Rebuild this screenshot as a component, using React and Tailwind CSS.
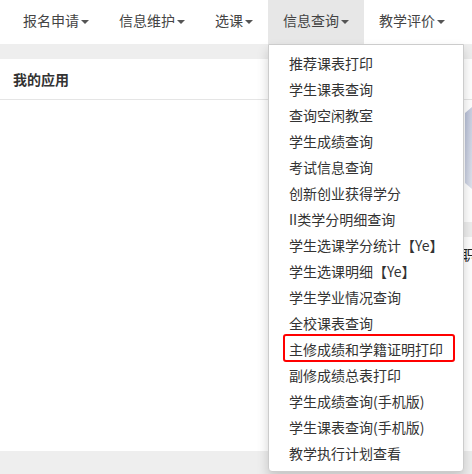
import React from "react";

const navItems = ["报名申请", "信息维护", "选课", "信息查询", "教学评价"];

const menuItems = [
  "推荐课表打印",
  "学生课表查询",
  "查询空闲教室",
  "学生成绩查询",
  "考试信息查询",
  "创新创业获得学分",
  "II类学分明细查询",
  "学生选课学分统计【Ye】",
  "学生选课明细【Ye】",
  "学生学业情况查询",
  "全校课表查询",
  "主修成绩和学籍证明打印",
  "副修成绩总表打印",
  "学生成绩查询(手机版)",
  "学生课表查询(手机版)",
  "教学执行计划查看",
];

function Caret() {
  return (
    <span className="ml-[2px] inline-block w-0 h-0 align-middle border-t-[4px] border-t-[#555] border-x-[4px] border-x-transparent" />
  );
}

function Dropdown() {
  return (
    <ul className="absolute left-0 top-full z-10 w-[196px] bg-white border border-[#ccc] rounded-b-[4px] py-[5px] shadow-[0_6px_12px_rgba(0,0,0,0.175)]">
      {menuItems.map((item, i) => (
        <li key={item} className="relative px-5 leading-5 py-[3px] text-[14px] text-[#333] whitespace-nowrap">
          {item}
          {/* red annotation box */}
          {i === 11 && (
            <div className="absolute left-[14px] right-[8px] -top-[2px] bottom-0 border-2 border-[#ff0000] rounded-[3px]" />
          )}
        </li>
      ))}
    </ul>
  );
}

export default function App() {
  return (
    <div
      className="w-[472px] h-[474px] overflow-hidden bg-[#eeeeee] flex flex-col"
      style={{ fontFamily: '"Noto Sans CJK SC", "Noto Sans", sans-serif' }}
    >
      <nav className="h-11 shrink-0 bg-white flex pl-2 relative z-10">
        {navItems.map((name) => (
          <div
            key={name}
            className={
              "relative px-[15px] pt-[10px] leading-5 text-[14px] text-[#444] " +
              (name === "信息查询" ? "bg-[#e7e7e7]" : "")
            }
          >
            {name}
            <Caret />
            {name === "信息查询" && <Dropdown />}
          </div>
        ))}
      </nav>

      <div className="pt-[15px] shrink-0">
        <div className="bg-white h-[392px] flex flex-col">
          <div className="h-[41px] shrink-0 flex items-center pl-[13px] border-b border-[#e5e5e5]">
            <span className="text-[14px] font-bold text-[#333]">我的应用</span>
          </div>
          <div className="flex justify-end">
            {/* app tiles peeking out at the right edge, behind the menu */}
            <div className="w-[11px] overflow-hidden flex flex-col items-end pt-[7px]">
              <svg width="7" height="82" viewBox="0 0 7 82" className="shrink-0">
                <defs>
                  <linearGradient id="tile" x1="0" y1="0" x2="1" y2="1">
                    <stop offset="0" stopColor="#b7bfd6" />
                    <stop offset="1" stopColor="#dfe3ed" />
                  </linearGradient>
                </defs>
                <polygon points="0,6 7,0 7,82 0,76" fill="url(#tile)" />
              </svg>
              <div className="mt-[33px] w-full h-[15px] shrink-0 bg-[#eeeeee]" />
              <div className="mt-[7px] self-start text-[14px] leading-5 text-[#222] whitespace-nowrap">
                职业
              </div>
            </div>
          </div>
        </div>
      </div>
    </div>
  );
}
